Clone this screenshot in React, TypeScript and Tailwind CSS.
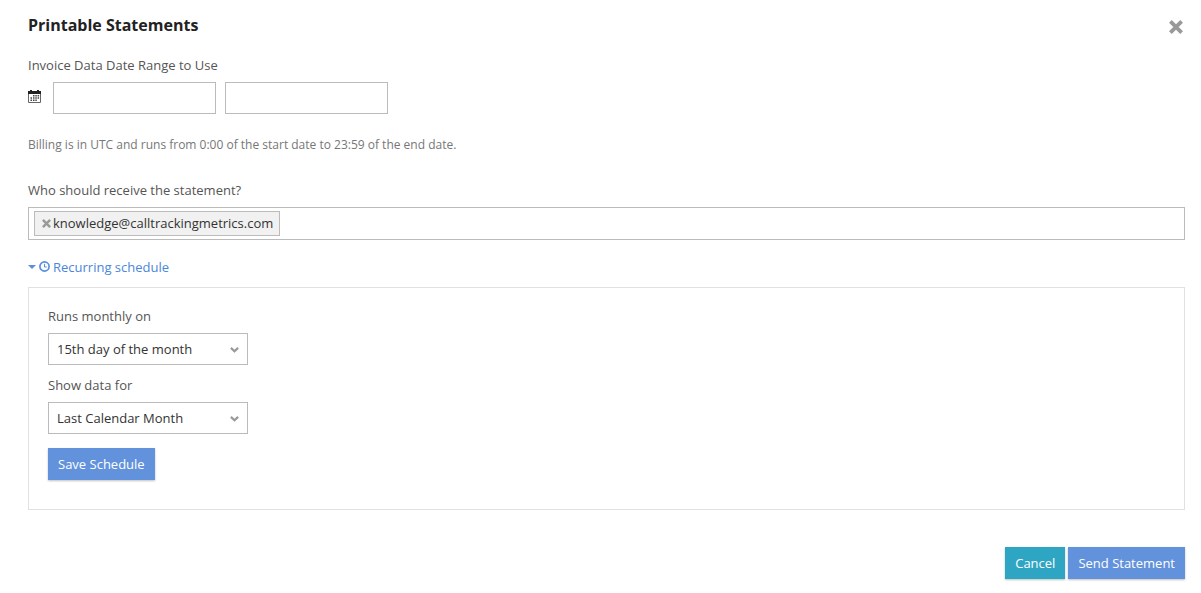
import { useState } from 'react'
import type { ReactNode } from 'react'

const CrossIcon = ({ className }: { className: string }) => (
  <svg viewBox="0 0 14 14" className={className} fill="none" stroke="currentColor" strokeWidth="3.8" aria-hidden="true">
    <path d="M1.4 1.4 12.6 12.6M12.6 1.4 1.4 12.6" />
  </svg>
)

const CalendarIcon = () => (
  <svg viewBox="0 0 13 13" className="mb-[3px] size-[13px]" aria-hidden="true">
    <path fill="none" stroke="#666" d="M.5 3.5h12v9H.5z" />
    <path fill="#222" d="M0 1h2V0h2v1h5V0h2v1h2v3H0z" />
    <path
      fill="#444"
      d="M5 5h1.5v1.5H5zM7.3 5h1.5v1.5H7.3zM9.6 5h1.5v1.5H9.6zM2.5 7.2H4v1.5H2.5zM5 7.2h1.5v1.5H5zM7.3 7.2h1.5v1.5H7.3zM9.6 7.2h1.5v1.5H9.6zM2.5 9.4H4v1.5H2.5zM5 9.4h1.5v1.5H5zM7.3 9.4h1.5v1.5H7.3z"
    />
  </svg>
)

const ClockIcon = () => (
  <svg viewBox="0 0 11 11" className="mb-px size-[11px]" fill="none" stroke="currentColor" aria-hidden="true">
    <circle cx="5.5" cy="5.5" r="4.6" strokeWidth="1.7" />
    <path d="M5.5 2.8V6h2.4" strokeWidth="1" />
  </svg>
)

type SelectProps = {
  id: string
  label: string
  value: string
  options: string[]
  onChange: (value: string) => void
}

const SelectField = ({ id, label, value, options, onChange }: SelectProps) => (
  <div className="w-[200px]">
    <label htmlFor={id} className="mb-[7px] block text-[#555]">
      {label}
    </label>
    <div className="relative">
      <select
        id={id}
        value={value}
        onChange={(e) => onChange(e.target.value)}
        className="block h-8 w-full appearance-none border border-[#bbb] bg-white pr-7 pl-2 text-[#333]"
      >
        {options.map((option) => (
          <option key={option}>{option}</option>
        ))}
      </select>
      <svg
        viewBox="0 0 9 6"
        className="pointer-events-none absolute top-[14px] right-[9px] h-[6px] w-[9px] text-[#999]"
        fill="none"
        stroke="currentColor"
        strokeWidth="2.2"
        aria-hidden="true"
      >
        <path d="M.9 .9 4.5 4.3 8.1 .9" />
      </svg>
    </div>
  </div>
)

const Button = ({ color, children }: { color: string; children: ReactNode }) => (
  <button type="button" className={`h-8 px-[10px] text-white shadow-[0_1px_2px_rgba(0,0,0,0.25)] ${color}`}>
    {children}
  </button>
)

export default function App() {
  const [start, setStart] = useState('')
  const [end, setEnd] = useState('')
  const [recipients, setRecipients] = useState(['knowledge@calltrackingmetrics.com'])
  const [open, setOpen] = useState(true)
  const [day, setDay] = useState('15th day of the month')
  const [range, setRange] = useState('Last Calendar Month')

  return (
    <main className="bg-white pt-[13px] pr-4 pb-[14px] pl-7 font-['Open_Sans',sans-serif] text-[13px] leading-5 text-[#555]">
      <header className="flex items-center justify-between">
        <h1 className="text-base leading-6 font-bold text-[#222]">Printable Statements</h1>
        <button type="button" aria-label="Close" className="mr-[2px] pt-[3px] text-[#999]">
          <CrossIcon className="size-[14px]" />
        </button>
      </header>

      <fieldset className="mt-[18px]">
        <legend className="mb-[7px]">Invoice Data Date Range to Use</legend>
        <div className="flex items-center">
          <CalendarIcon />
          <input
            type="text"
            aria-label="Start date"
            value={start}
            onChange={(e) => setStart(e.target.value)}
            className="ml-3 h-8 w-[163px] border border-[#bbb] px-2"
          />
          <input
            type="text"
            aria-label="End date"
            value={end}
            onChange={(e) => setEnd(e.target.value)}
            className="ml-[9px] h-8 w-[163px] border border-[#bbb] px-2"
          />
        </div>
      </fieldset>
      <p className="mt-[21px] text-xs leading-5 text-[#777]">
        Billing is in UTC and runs from 0:00 of the start date to 23:59 of the end date.
      </p>

      <label htmlFor="recipients" className="mt-[25px] mb-[7px] block">
        Who should receive the statement?
      </label>
      <div className="flex border border-[#bbb] px-[5px] py-[3px]">
        {recipients.map((email) => (
          <span
            key={email}
            className="flex h-[25px] items-center gap-[2px] border border-[#bbb] bg-[#f1f1f1] pr-[6px] pb-px pl-[7px] text-[#333]"
          >
            <button
              type="button"
              aria-label={`Remove ${email}`}
              onClick={() => setRecipients(recipients.filter((r) => r !== email))}
              className="pt-px text-[#999]"
            >
              <CrossIcon className="size-[9px]" />
            </button>
            {email}
          </span>
        ))}
        <input id="recipients" type="text" className="h-[25px] min-w-0 flex-1 px-2 outline-none" />
      </div>

      <button
        type="button"
        aria-expanded={open}
        onClick={() => setOpen(!open)}
        className="mt-[17px] flex items-center text-[#5a8fdc]"
      >
        <svg viewBox="0 0 8 4" className="mr-[3px] h-1 w-2" fill="currentColor" aria-hidden="true">
          <path d="M0 0h8L4 4z" />
        </svg>
        <ClockIcon />
        <span className="ml-[3px] text-[#4a86dc]">Recurring schedule</span>
      </button>

      {open && (
        <section className="mt-[10px] border border-[#e1e1e1] px-[19px] pt-[18px] pb-[29px]">
          <SelectField
            id="run-day"
            label="Runs monthly on"
            value={day}
            onChange={setDay}
            options={['1st day of the month', '15th day of the month', 'Last day of the month']}
          />
          <div className="mt-[10px] mb-[14px]">
            <SelectField
              id="data-range"
              label="Show data for"
              value={range}
              onChange={setRange}
              options={['Last Calendar Month', 'Last 30 Days']}
            />
          </div>
          <Button color="bg-[#6292dc]">Save Schedule</Button>
        </section>
      )}

      <footer className="mt-[37px] flex justify-end gap-[3px]">
        <Button color="bg-[#2ea6c3]">Cancel</Button>
        <Button color="bg-[#6292dc]">Send Statement</Button>
      </footer>
    </main>
  )
}
